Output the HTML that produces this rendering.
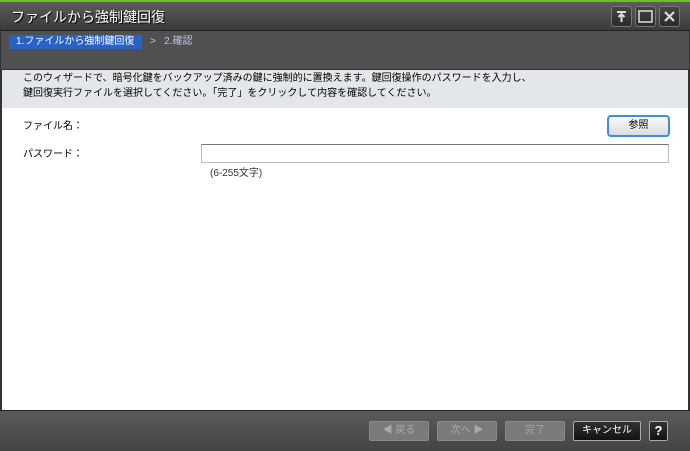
<!DOCTYPE html>
<html><head><meta charset="utf-8"><style>
*{margin:0;padding:0;box-sizing:border-box}
body{width:690px;height:451px;overflow:hidden;font-family:"Liberation Sans","Noto Sans CJK JP",sans-serif;background:#fff;position:relative;font-size:11px}
.abs{position:absolute}
#top{left:0;top:0;width:690px;height:2px;background:#6bbf1e}
#title{left:0;top:2px;width:690px;height:29px;background:linear-gradient(#5c5c5c,#3a3a3a);border-bottom:1px solid #222}
#title span{position:absolute;left:11px;top:5px;color:#fff;font-size:14px;text-shadow:1px 1px 1px #000}
.wb{top:6px;width:21px;height:21px;border:1px solid #777;border-radius:3px;background:linear-gradient(#444,#2a2a2a);color:#ddd;text-align:center}
#crumb{left:0;top:31px;width:690px;height:38px;background:#505050;border-left:1px solid #333;border-right:1px solid #333}
#step1{left:9px;top:35px;width:133px;height:14px;background:#2a62c4;color:#fff;font-size:10px;padding-left:7px;line-height:13px}
#step2{left:150px;top:35px;color:#b8c8e8;font-size:10px;line-height:13px}
#desc{left:0;top:69px;width:690px;height:39px;background:#e3e6ea;border-top:1px solid #333;border-left:2px solid #333;border-right:2px solid #333;padding:1px 0 0 21px;font-size:10px;line-height:15px;color:#000}
#main{left:0;top:108px;width:690px;height:302px;border-left:2px solid #333;border-right:2px solid #333}
.lbl{font-size:10px;color:#000}
#browse{left:607px;top:115px;width:63px;height:22px;border:2px solid #3a8fe0;border-radius:4px;background:linear-gradient(#fafafa,#dcdcdc);font-size:10px;text-align:center;line-height:17px}
#pw{left:201px;top:144px;width:468px;height:19px;border:1px solid #bbb;border-top-color:#777}
#foot{left:0;top:410px;width:690px;height:41px;background:linear-gradient(#5a5a5a,#444);border-top:1px solid #222}
.b{top:421px;height:20px;border-radius:2px;font-size:10px;text-align:center;line-height:17px}
.dis{background:#7a7a7a;border:1px solid #8a8a8a;color:#a8a8a8}
</style></head><body>
<div class="abs" id="top"></div>
<div class="abs" id="title"><span>ファイルから強制鍵回復</span></div>
<div class="abs wb" style="left:611px"><svg width="19" height="19"><path d="M5 5h9M9.5 7v8M6.5 10l3-3 3 3" stroke="#ddd" stroke-width="2" fill="none"/></svg></div>
<div class="abs wb" style="left:635px"><svg width="19" height="19"><rect x="3" y="4" width="13" height="11" stroke="#ddd" stroke-width="1.5" fill="none"/></svg></div>
<div class="abs wb" style="left:659px"><svg width="19" height="19"><path d="M5 5l9 9M14 5l-9 9" stroke="#ddd" stroke-width="2.2"/></svg></div>
<div class="abs" id="crumb"></div>
<div class="abs" id="step1">1.ファイルから強制鍵回復</div>
<div class="abs" id="step2">&gt;&nbsp;&nbsp;&nbsp;2.確認</div>
<div class="abs" id="desc">このウィザードで、暗号化鍵をバックアップ済みの鍵に強制的に置換えます。鍵回復操作のパスワードを入力し、<br>鍵回復実行ファイルを選択してください。「完了」をクリックして内容を確認してください。</div>
<div class="abs" id="main"></div>
<div class="abs lbl" style="left:23px;top:117px">ファイル名：</div>
<div class="abs lbl" style="left:23px;top:145px">パスワード：</div>
<div class="abs" id="browse">参照</div>
<div class="abs" id="pw"></div>
<div class="abs lbl" style="left:210px;top:164px;color:#333">(6-255文字)</div>
<div class="abs" id="foot"></div>
<div class="abs b dis" style="left:369px;width:60px">◀ 戻る</div>
<div class="abs b dis" style="left:437px;width:60px">次へ ▶</div>
<div class="abs b dis" style="left:505px;width:60px">完了</div>
<div class="abs b" style="left:573px;width:68px;background:linear-gradient(#333,#111);border:1px solid #aaa;color:#fff">キャンセル</div>
<div class="abs b" style="left:649px;width:19px;background:linear-gradient(#333,#111);border:1px solid #aaa;color:#fff;font-weight:bold;font-size:13px">?</div>
</body></html>
